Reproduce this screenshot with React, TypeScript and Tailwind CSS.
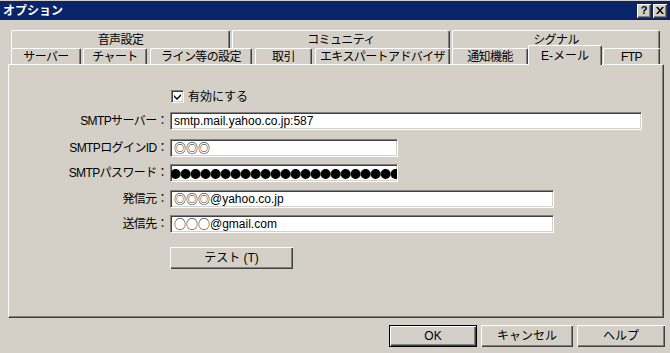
import React from 'react';

const FONT = { fontFamily: '"Liberation Sans", "Noto Sans CJK JP", sans-serif' };
const CJK = { fontFamily: '"Noto Sans CJK JP", sans-serif' };

function Tab({ label, w, ml = 0, h = 'h-[18px]' }: { label: string; w: string; ml?: number; h?: string }) {
  return (
    <div
      className={`${w} ${h} shrink-0 flex items-center justify-center border-l border-t border-r border-l-white border-t-white border-r-[#404040] rounded-t-[2px] shadow-[inset_-1px_0_0_#808080] text-[12px] tracking-[-0.6px] leading-none text-black whitespace-nowrap`}
      style={{ marginLeft: ml }}
    >
      {label}
    </div>
  );
}

function Field({ label, width, top, children }: { label: string; width: string; top: string; children: React.ReactNode }) {
  return (
    <div className={`flex items-center ${top}`}>
      <div className="w-[160px] text-right text-[12px] leading-none pr-[1px] tracking-[-0.6px]">{label}</div>
      <div
        className={`${width} h-[18px] ml-[1px] bg-white border border-t-[#808080] border-l-[#808080] border-b-white border-r-white shadow-[inset_1px_1px_0_#404040,inset_-1px_-1px_0_#d4d0c8] overflow-hidden flex items-center pl-[3px] text-[12px] leading-none whitespace-nowrap`}
      >
        {children}
      </div>
    </div>
  );
}

function Button({ label, w, isDefault = false }: { label: string; w: string; isDefault?: boolean }) {
  return (
    <div
      className={`${w} h-[22px] flex items-center justify-center text-[12px] leading-none bg-[#d4d0c8] ${
        isDefault
          ? 'border border-black shadow-[inset_1px_1px_0_#ffffff,inset_-1px_-1px_0_#404040,inset_-2px_-2px_0_#808080]'
          : 'shadow-[inset_1px_1px_0_#ffffff,inset_-1px_-1px_0_#404040,inset_-2px_-2px_0_#808080]'
      }`}
    >
      {label}
    </div>
  );
}

export default function App() {
  return (
    <div className="w-[670px] h-[353px] bg-[#d4d0c8] overflow-hidden flex flex-col text-black" style={FONT}>
      {/* Title bar */}
      <div className="mt-[1px] h-[19px] bg-[#0a246a] flex items-center justify-between pl-[3px] pr-[3px]">
        <span className="text-white font-bold text-[12px] leading-none">オプション</span>
        <div className="flex gap-[2px]">
          <div className="w-[14px] h-[14px] bg-[#d4d0c8] shadow-[inset_1px_1px_0_#ffffff,inset_-1px_-1px_0_#404040,inset_-2px_-2px_0_#808080] flex items-center justify-center text-[11px] font-bold leading-none">?</div>
          <div className="w-[14px] h-[14px] bg-[#d4d0c8] shadow-[inset_1px_1px_0_#ffffff,inset_-1px_-1px_0_#404040,inset_-2px_-2px_0_#808080] flex items-center justify-center">
            <svg width="8" height="7" viewBox="0 0 8 7">
              <path d="M0 0h2l2 2.5L6 0h2L5 3.5 8 7H6L4 4.5 2 7H0l3-3.5z" fill="#000" />
            </svg>
          </div>
        </div>
      </div>

      {/* Tabs back row */}
      <div className="mt-[10px] flex">
        <Tab label="音声設定" w="w-[219px]" ml={11} />
        <Tab label="コミュニティ" w="w-[218px]" ml={2} />
        <Tab label="シグナル" w="w-[208px]" ml={2} />
      </div>

      {/* Tabs front row */}
      <div className="flex items-end h-[16px]">
        <Tab label="サーバー" w="w-[70px]" ml={11} h="h-[16px]" />
        <Tab label="チャート" w="w-[64px]" ml={2} h="h-[16px]" />
        <Tab label="ライン等の設定" w="w-[102px]" ml={3} h="h-[16px]" />
        <Tab label="取引" w="w-[57px]" ml={3} h="h-[16px]" />
        <Tab label="エキスパートアドバイザ" w="w-[135px]" ml={3} h="h-[16px]" />
        <Tab label="通知機能" w="w-[76px]" ml={2} h="h-[16px]" />
        <div className="relative z-10 w-[74px] h-[20px] -mb-[1px] shrink-0 bg-[#d4d0c8] flex items-center justify-center border-l border-t border-r border-l-white border-t-white border-r-[#404040] rounded-t-[2px] shadow-[inset_-1px_0_0_#808080] text-[12px] leading-none">
          E-メール
        </div>
        <Tab label="FTP" w="w-[57px]" ml={1} h="h-[16px]" />
      </div>

      {/* Panel */}
      <div className="ml-[8px] w-[656px] h-[254px] border border-l-white border-t-white border-r-[#404040] border-b-[#404040] shadow-[inset_-1px_-1px_0_#808080] flex flex-col">
        <div className="flex items-center mt-[25px] ml-[162px]">
          <div className="w-[13px] h-[13px] bg-white border border-t-[#808080] border-l-[#808080] border-b-white border-r-white shadow-[inset_1px_1px_0_#404040,inset_-1px_-1px_0_#d4d0c8] flex items-center justify-center">
            <svg width="7" height="7" viewBox="0 0 7 7">
              <path d="M0 2l3 3 4-4v2L3 7 0 4z" fill="#000" />
            </svg>
          </div>
          <span className="ml-[4px] text-[12px] leading-none">有効にする</span>
        </div>

        <Field label="SMTPサーバー：" width="w-[472px]" top="mt-[9px]">smtp.mail.yahoo.co.jp:587</Field>
        <Field label="SMTPログインID：" width="w-[228px]" top="mt-[9px]"><span style={CJK}>◎◎◎</span></Field>
        <Field label="SMTPパスワード：" width="w-[228px]" top="mt-[7px]">
          <span className="-ml-[4px] text-[11px] tracking-[-1px]" style={CJK}>●●●●●●●●●●●●●●●●●●●●●●●●</span>
        </Field>
        <Field label="発信元：" width="w-[384px]" top="mt-[8px]"><span style={CJK}>◎◎◎</span>@yahoo.co.jp</Field>
        <Field label="送信先：" width="w-[384px]" top="mt-[7px]"><span style={CJK}>○○○</span>@gmail.com</Field>

        <div className="mt-[14px] ml-[161px]">
          <Button label="テスト (T)" w="w-[123px]" />
        </div>
      </div>

      {/* Bottom buttons */}
      <div className="mt-[7px] flex justify-end gap-[4px] pr-[5px]">
        <Button label="OK" w="w-[88px]" isDefault />
        <Button label="キャンセル" w="w-[92px]" />
        <Button label="ヘルプ" w="w-[88px]" />
      </div>
    </div>
  );
}
